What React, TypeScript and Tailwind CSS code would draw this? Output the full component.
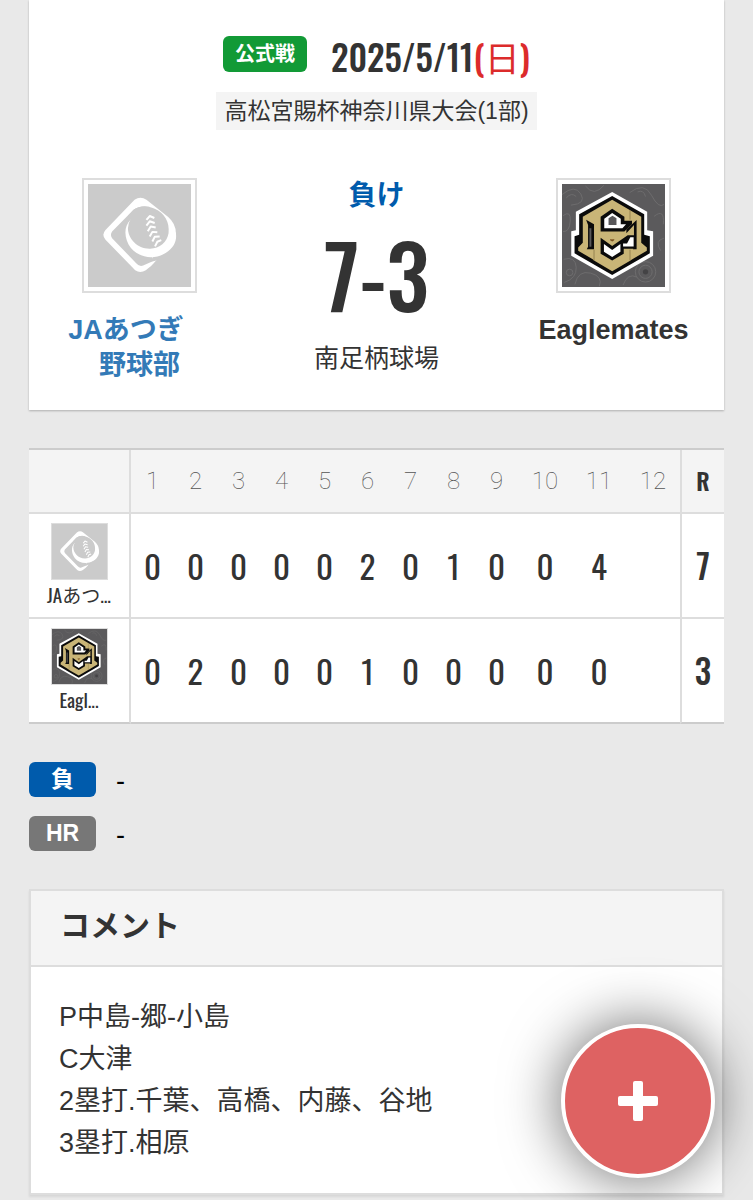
import type { ReactNode } from "react";

const innings = ["1", "2", "3", "4", "5", "6", "7", "8", "9", "10", "11", "12"];

const teams = [
  { name: "JAあつ...", logo: <BallLogo />, runs: ["0", "0", "0", "0", "0", "2", "0", "1", "0", "0", "4", ""], total: "7" },
  { name: "Eagl...", logo: <EagleLogo />, runs: ["0", "2", "0", "0", "0", "1", "0", "0", "0", "0", "0", ""], total: "3" },
];

const comments = ["P中島-郷-小島", "C大津", "2塁打.千葉、高橋、内藤、谷地", "3塁打.相原"];

function BallLogo() {
  return (
    <svg viewBox="-30 -18 312 312" className="block w-full bg-[#cbcbcb]" aria-hidden="true">
      <path
        d="M111 30 Q129 17 147 30 L213 82 Q237 103 236 133 C235 166 208 198 170 203 L177 213 C165 228 155 236 145 243 Q128 254 113 243 L23 151 Q10 136 23 121 Z"
        fill="#fff"
      />
      <path d="M108 60 Q129 45 156 51 L165 210 L177 213 Q158 218 137 229 Q126 234 116 222 L43 146 Q36 136 43 126 Z" fill="#cbcbcb" />
      <path d="M170 196 L200 193 L178 213 L160 216 Z" fill="#cbcbcb" />
      <path d="M99 90 C76 112 80 150 100 176 C121 202 166 215 205 191 C232 175 240 151 236 130 L190 75 Z" fill="#fff" />
      <path d="M108 60 C126 47 150 48 172 57 C202 70 218 98 214 131 C209 158 188 177 158 178 C120 179 91 147 91 116 Q91 101 99 89 L90 80 Z" fill="#cbcbcb" />
      <g fill="none" stroke="#fff" strokeWidth="6" strokeLinejoin="round">
        <path d="M147 91 L157 79 L171 85" />
        <path d="M147 108 L157 95 L172 100" />
        <path d="M151 125 L160 111 L175 114" />
        <path d="M157 141 L165 127 L180 128" />
        <path d="M165 156 L172 142 L187 141" />
        <path d="M173 171 L180 157 L192 152" />
      </g>
    </svg>
  );
}

function EagleLogo() {
  return (
    <svg viewBox="-9 -12 312 312" className="block w-full bg-[#5b5a5c]" aria-hidden="true">
      <g fill="none" stroke="#6d6c6d" strokeWidth="3">
        <path d="M-9 20 Q30 -12 48 18 T18 52 M4 30 Q20 12 34 26 M62 -6 Q88 28 118 -8" />
        <path d="M196 14 Q240 -20 262 22 T300 50 M220 12 Q238 4 244 26 M270 86 Q302 60 298 110" />
        <path d="M-6 84 Q18 66 16 100 T-6 132 M-4 216 Q32 206 34 240 T-2 286 M30 292 Q40 248 78 258 T104 298" />
        <path d="M176 294 Q190 256 218 270 M290 190 Q270 160 300 152" />
        <circle cx="244" cy="254" r="31" />
        <circle cx="244" cy="254" r="20" />
        <circle cx="14" cy="256" r="10" />
      </g>
      <circle cx="244" cy="254" r="8" fill="#444345" />
      <path d="M143 12 L249 72 V128 L267 131 V205 L143 276 L19 205 V131 L33 128 V72 Z" fill="#fff" />
      <path d="M143 24 L240 80 V142 L257 146 V198 L143 264 L29 198 V146 L43 142 V80 Z" fill="#0b0b0b" />
      <path
        d="M143 36 L231 87 V166 L248 180 V190 L204 216 L196 221 L143 252 L88 220 L84 216 L40 190 V180 L54 166 V87 Z"
        fill="#c9b577"
      />
      <path d="M64 96 L88 110 V186 H66 L70 178 V112 Z" fill="#0b0b0b" />
      <path d="M74 122 H80 V178 H74 Z" fill="#59585a" />
      <path d="M217 97 V186 H206 L209 178 V112 L186 137 V126 Z" fill="#0b0b0b" />
      <path d="M108 87 L143 63 L180 87 V99 H203 V110 L180 132 H108 Z" fill="#0b0b0b" />
      <path d="M119 93 L143 76 L169 93 V110 H185 L174 122 H119 Z" fill="#fff" />
      <path d="M132 112 V92 L144 84 L156 92 V112 Z" fill="#59585a" />
      <path d="M108 151 L143 176 L190 143 H214 V184 H178 V199 L143 220 L108 199 Z" fill="#0b0b0b" />
      <path d="M198 149 H208 V177 H176 V168 H188 Z" fill="#fff" />
      <path d="M118 170 L143 188 L168 170 V193 L143 209 L118 193 Z" fill="#fff" />
      <path d="M143 161 L137 157 H149 Z" fill="#704516" stroke="#704516" strokeWidth="2" />
      <path d="M197 67 V96 M88 187 V220 M197 187 V220" stroke="#7c6c3e" strokeWidth="2" />
    </svg>
  );
}

function TeamLogo({ children }: { children: ReactNode }) {
  return <div className="w-[115px] border-2 border-[#ddd] bg-white p-1">{children}</div>;
}

function ResultRow({ label, color, value }: { label: string; color: string; value: string }) {
  return (
    <div className="flex items-center gap-5">
      <dt className={`w-[67px] rounded-md text-center text-[23px] leading-[35px] font-bold text-white ${color}`}>{label}</dt>
      <dd className="pt-1 text-[27px] leading-[31px] text-black">{value}</dd>
    </div>
  );
}

export default function App() {
  return (
    <div className="min-h-screen bg-[#e9e9e9] px-[29px] pb-1.5 font-['Liberation_Sans','Noto_Sans_CJK_JP',sans-serif] text-[#333]" lang="ja">
      {/* Game summary */}
      <section className="bg-white pt-9 pb-[27px] shadow-[0_1px_2px_rgba(0,0,0,0.25)]">
        <div className="flex items-start justify-center gap-6">
          <span className="rounded-md bg-[#129a36] px-3 text-[20px] leading-9 font-bold text-white">公式戦</span>
          <h1 className="font-['Oswald','Noto_Sans_CJK_JP',sans-serif] text-[35px] leading-[40px] font-medium">
            2025/5/11<span className="text-[#dc2b2b]">(<span className="font-normal">日</span>)</span>
          </h1>
        </div>
        <div className="mt-4 flex justify-center">
          <p className="bg-[#f4f4f4] px-2 text-[23px] leading-[38px]">高松宮賜杯神奈川県大会(1部)</p>
        </div>

        <div className="-mx-2 mt-12 grid grid-cols-3">
          <div className="flex flex-col items-center">
            <TeamLogo><BallLogo /></TeamLogo>
            <a href="#team" className="mt-5 text-center text-[27px] leading-[35px] font-bold whitespace-pre text-[#337ab7]">
              {"JAあつぎ\u3000\n野球部"}
            </a>
          </div>
          <div className="flex flex-col items-center">
            <p className="text-[28px] leading-9 font-bold text-[#005bac]">負け</p>
            <p className="mt-2 font-['Oswald',sans-serif] text-[86px] leading-[102px] font-medium">7-3</p>
            <p className="mt-4 text-[25px] leading-9">南足柄球場</p>
          </div>
          <div className="flex flex-col items-center">
            <TeamLogo><EagleLogo /></TeamLogo>
            <p className="mt-5 text-[27px] leading-[35px] font-bold">Eaglemates</p>
          </div>
        </div>
      </section>

      {/* Line score */}
      <table className="mt-[38px] w-full table-fixed border-separate border-spacing-0 border-t-2 border-[#ccc] bg-white text-center font-['Oswald','Noto_Sans_CJK_JP',sans-serif]">
        <colgroup>
          <col className="w-[102px]" />
          {innings.map((n) => (
            <col key={n} className={n.length > 1 ? "w-[54px]" : "w-[43px]"} />
          ))}
          <col className="w-[44px]" />
        </colgroup>
        <thead>
          <tr className="h-16 bg-[#f4f4f4]">
            <td className="border-r-2 border-b-2 border-[#ddd]" />
            {innings.map((n) => (
              <th key={n} scope="col" className="border-b-2 border-[#ddd] font-['Roboto',sans-serif] text-[24px] font-thin text-[#555]">
                {n}
              </th>
            ))}
            <th scope="col" className="border-b-2 border-l-2 border-[#ddd] text-[23px] font-semibold">R</th>
          </tr>
        </thead>
        <tbody>
          {teams.map((team) => (
            <tr key={team.name} className="group h-[105px] text-[33px]">
              <th scope="row" className="border-r-2 border-b-2 border-[#ddd] text-[19px] font-normal group-last:border-b-[#ccc]">
                <div className="mx-auto w-[57px] border border-[#ddd]">{team.logo}</div>
                <div className="leading-7">{team.name}</div>
              </th>
              {team.runs.map((run, i) => (
                <td key={i} className="border-b-2 border-[#ddd] group-last:border-b-[#ccc]">{run}</td>
              ))}
              <td className="border-b-2 border-l-2 border-[#ddd] font-medium group-last:border-b-[#ccc]">{team.total}</td>
            </tr>
          ))}
        </tbody>
      </table>

      <dl className="mt-[38px] flex flex-col gap-[19px]">
        <ResultRow label="負" color="bg-[#005bac]" value="-" />
        <ResultRow label="HR" color="bg-[#777]" value="-" />
      </dl>

      {/* Comment */}
      <section className="mt-[38px] border-2 border-[#ddd] bg-white shadow-[0_2px_2px_rgba(0,0,0,0.08)]">
        <h2 className="border-b-2 border-[#ddd] bg-[#f4f4f4] px-[29px] pb-1 text-[30px] leading-[70px] font-bold">コメント</h2>
        <div className="px-7 py-[29px] text-[27px] leading-[42px]">
          {comments.map((line) => (
            <p key={line}>{line}</p>
          ))}
        </div>
      </section>

      <button
        type="button"
        aria-label="追加"
        className="fixed right-[38px] bottom-[22px] flex size-[154px] items-center justify-center rounded-full border-4 border-white bg-[#de6262] shadow-[0_0_58px_rgba(0,0,0,0.6)]"
      >
        <svg viewBox="0 0 40 40" className="size-10" fill="#fff" aria-hidden="true">
          <rect x="15" width="10" height="40" rx="2" />
          <rect y="15" width="40" height="10" rx="2" />
        </svg>
      </button>
    </div>
  );
}
